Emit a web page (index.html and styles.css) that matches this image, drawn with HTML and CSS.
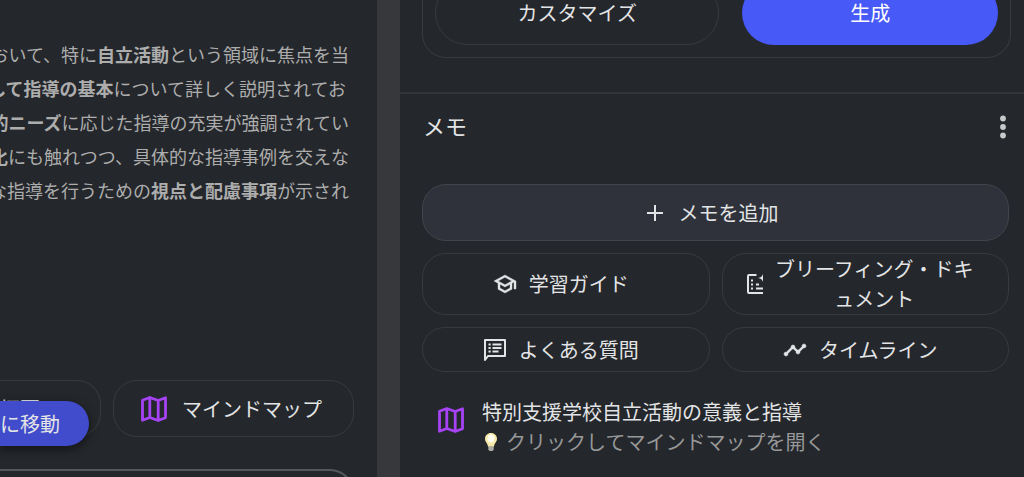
FILE: index.html
```
<!DOCTYPE html>
<html lang="ja">
<head>
<meta charset="utf-8">
<title>メモ</title>
<meta name="viewport" content="width=device-width, initial-scale=1">
<link rel="stylesheet" href="styles.css">
</head>
<body>
<svg class="defs" aria-hidden="true">
  <symbol id="map" viewBox="0 0 26 26"><path d="M1.5 4.2 8.8 1.5l8.4 3 7.3-2.7v20l-7.3 2.7-8.4-3-7.3 2.7zM8.8 1.5v20M17.2 4.5v20" fill="none" stroke="currentColor" stroke-width="2.8" stroke-linejoin="round"/></symbol>
</svg>
<div class="app">
  <main class="chat">
    <article class="summary">
      <p>おいて、特に<b>自立活動</b>という領域に焦点を当</p>
      <p class="short"><b>して指導の基本</b>について詳しく説明されてお</p>
      <p><b>的ニーズ</b>に応じた指導の充実が強調されてい</p>
      <p><b>化</b>にも触れつつ、具体的な指導事例を交えな</p>
      <p>な指導を行うための<b>視点と配慮事項</b>が示され</p>
    </article>
    <div class="actions">
      <button class="outline overview" type="button">概要</button>
      <button class="outline mindmap" type="button"><svg class="map"><use href="#map"/></svg>マインドマップ</button>
      <button class="jump" type="button">に移動</button>
    </div>
    <div class="composer"></div>
  </main>
  <aside class="studio">
    <section class="audio">
      <button class="outline pill" type="button">カスタマイズ</button>
      <button class="pill primary" type="button">生成</button>
    </section>
    <section class="notes">
      <header class="heading">
        <h2>メモ</h2>
        <button class="more" type="button" aria-label="その他"><svg viewBox="0 0 8 24"><circle cx="4" cy="3.5" r="2.9"/><circle cx="4" cy="12" r="2.9"/><circle cx="4" cy="20.5" r="2.9"/></svg></button>
      </header>
      <div class="grid">
        <button class="outline add" type="button"><svg viewBox="0 0 16 16" class="plus"><path d="M8 0v16M0 8h16" stroke="currentColor" stroke-width="2"/></svg>メモを追加</button>
        <button class="outline tall" type="button"><svg class="icon" viewBox="0 0 24 24" fill="currentColor"><path d="M12 3 1 9l4 2.180v6L12 21l7-3.820v-6l2-1.090V17h2V9L12 3zm6.820 6L12 12.720 5.180 9 12 5.280 18.820 9zM17 15.990l-5 2.730-5-2.730v-3.720L12 15l5-2.730v3.720z" stroke="currentColor" stroke-width=".4"/></svg>学習ガイド</button>
        <button class="outline tall brief" type="button"><svg class="doc" viewBox="0 0 16 20" fill="none" stroke="currentColor" stroke-width="2"><path d="M9.500 1H2Q1 1 1 2v16q0 1 1 1h14M9 10.500h3M9 14.500h7"/><path d="M4 6.500h2M4 10.500h2M4 14.500h2"/><path d="M16 0v8c-.8-2.400-1.900-3.300-5-4 3.100-.7 4.200-1.600 5-4z" fill="currentColor" stroke="none"/></svg><span>ブリーフィング・ドキ<br>ュメント</span></button>
        <button class="outline" type="button"><svg class="icon" viewBox="0 0 24 24" fill="none" stroke="currentColor" stroke-width="2"><path d="M2 22V2h20v16H5z" stroke-linejoin="round"/><path d="M5.500 6.500h2.200M5.500 10h2.200M5.500 13.500h2.200M9.500 6.500h9M9.500 10h9M9.500 13.500h6"/></svg>よくある質問</button>
        <button class="outline" type="button"><svg class="icon" viewBox="0 0 24 24" fill="currentColor"><path d="M23 8c0 1.100-.9 2-2 2-.18 0-.35-.02-.51-.07l-3.560 3.550c.05.16.07.34.07.52 0 1.100-.9 2-2 2s-2-.9-2-2c0-.18.02-.36.07-.52l-2.550-2.550c-.16.05-.34.07-.52.07s-.36-.02-.52-.07l-4.550 4.560c.05.16.07.33.07.51 0 1.100-.9 2-2 2s-2-.9-2-2 .9-2 2-2c.18 0 .35.02.51.07l4.560-4.550C8.020 9.360 8 9.180 8 9c0-1.100.9-2 2-2s2 .9 2 2c0 .18-.02.36-.07.52l2.550 2.550c.16-.05.34-.07.52-.07s.36.02.52.07l3.550-3.560C19.020 8.350 19 8.180 19 8c0-1.100.9-2 2-2s2 .9 2 2z" stroke="currentColor" stroke-width=".5"/></svg>タイムライン</button>
      </div>
      <a class="note" href="#">
        <svg class="map"><use href="#map"/></svg>
        <span class="note-text">
          <span class="note-title">特別支援学校自立活動の意義と指導</span>
          <span class="note-hint"><svg class="bulb" viewBox="0 0 14 20"><path d="M7 1C3.500 1 1 3.500 1 6.700c0 3.300 2.800 4.500 3 8h6c.2-3.500 3-4.700 3-8C13 3.500 10.500 1 7 1z" fill="#f7e9a8"/><ellipse cx="7" cy="6.500" rx="3.600" ry="4" fill="#fffdf0"/><path d="M4.300 14.500h5.400v3L8.500 19h-3l-1.200-1.500z" fill="#a9a9a6"/></svg>クリックしてマインドマップを開く</span>
        </span>
      </a>
    </section>
  </aside>
</div>
</body>
</html>
```
FILE: styles.css
```
* { box-sizing: border-box; }
body {
  margin: 0;
  background: #37383b;
  color: #e3e4e6;
  font: 20px/30px "Noto Sans CJK JP", sans-serif;
  overflow: hidden;
}
.defs { position: absolute; width: 0; height: 0; }
svg { display: block; flex: none; }
p, h2 { margin: 0; }
button { font: inherit; color: inherit; background: none; border: 0; padding: 0; }

.app {
  display: grid;
  grid-template-columns: 377fr 624fr;
  column-gap: 23px;
  height: 100vh;
}
.chat, .studio { background: #24272b; min-width: 0; overflow: hidden; }
.chat {
  display: flex;
  flex-direction: column;
  padding: 37px 23px 0 0;
}
.summary { color: #adadad; font-size: 18px; line-height: 34px; }
.summary p {
  display: flex;
  justify-content: flex-end;
  white-space: nowrap;
  padding-right: 5px;
}
.summary .short { padding-right: 8px; }
.outline { border: 1px solid #3a3a3c; border-radius: 24px; }
.actions {
  position: relative;
  flex: none;
  display: flex;
  gap: 12px;
  margin-top: 173px;
}
.actions .outline { height: 57px; white-space: nowrap; }
.actions .overview {
  flex: 0 0 101px;
  border-left: 0;
  border-radius: 0 24px 24px 0;
  text-align: left;
}
.mindmap {
  flex: 1;
  display: flex;
  align-items: center;
  padding-left: 27px;
  gap: 15px;
}
.map { width: 26px; height: 26px; color: #a643f5; }
.jump {
  position: absolute;
  left: 0;
  top: 21px;
  width: 89px;
  height: 45px;
  border-radius: 0 23px 23px 0;
  background: #404ccb;
  box-shadow: 0 3px 10px rgba(0, 0, 0, .5);
  text-align: left;
}
.composer {
  flex: none;
  height: 60px;
  margin-top: 32px;
  border: 2px solid #56575a;
  border-width: 2px 2px 0 0;
  border-radius: 0 24px 0 0;
}

.audio {
  display: grid;
  grid-template-columns: 285fr 256fr;
  gap: 23px;
  margin: -19px 13px 0 22px;
  padding: 0 12px 12px;
  border: 1px solid #3a3a3c;
  border-top: 0;
  border-radius: 0 0 24px 24px;
}
.pill { height: 64px; border-radius: 32px; }
.primary { background: #4759f7; color: #fff; }
.notes {
  margin-top: 34px;
  padding: 15px 15px 0 22px;
  border-top: 2px solid #343538;
}
.heading { display: flex; align-items: center; justify-content: space-between; }
h2 { padding-left: 1px; font-size: 22px; font-weight: 400; line-height: 32px; }
.more { padding: 3px 2px 0 0; }
.more svg { width: 8px; height: 24px; fill: #c7c9ca; }
.grid {
  display: grid;
  grid-template-columns: 1fr 1fr;
  gap: 12px;
  margin-top: 43px;
}
.grid .outline {
  display: flex;
  align-items: center;
  justify-content: center;
  gap: 12px;
  height: 45px;
  padding-right: 10px;
}
.grid .add {
  grid-column: span 2;
  height: 57px;
  gap: 16px;
  padding-right: 6px;
  background: #2f323b;
  border-color: #42444b;
}
.grid .tall { height: 62px; }
.plus { width: 16px; height: 16px; }
.icon { width: 24px; height: 24px; }
.doc { width: 16px; height: 20px; }
.note {
  display: flex;
  align-items: flex-start;
  gap: 18px;
  margin-top: 25px;
  padding-left: 16px;
  color: inherit;
  text-decoration: none;
}
.note .map { margin-top: 10px; }
.note-text, .note-title { display: block; }
.note-hint { display: flex; align-items: center; gap: 8px; color: #979899; }
.bulb { width: 14px; height: 20px; margin-left: 2px; }
```
